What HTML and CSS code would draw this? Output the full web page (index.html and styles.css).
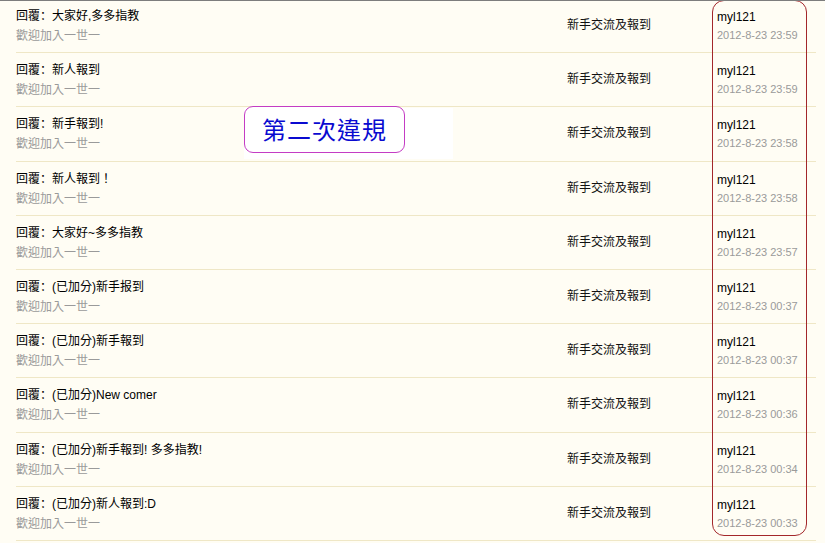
FILE: index.html
```html
<!DOCTYPE html>
<html lang="zh-Hant">
<head>
<meta charset="utf-8">
<title>回覆列表</title>
<link rel="stylesheet" href="styles.css">
</head>
<body>
<div class="frame">
  <div class="list">
    <div class="row">
      <div class="topic"><div class="title">回覆<span class="c" lang="zh-Hans">：</span>大家好,多多指教</div><div class="sub">歡迎加入一世一</div></div>
      <div class="forum">新手交流及報到</div>
      <div class="author"><div class="name">myl121</div><div class="date">2012-8-23 23:59</div></div>
    </div>
    <div class="row">
      <div class="topic"><div class="title">回覆<span class="c" lang="zh-Hans">：</span>新人報到</div><div class="sub">歡迎加入一世一</div></div>
      <div class="forum">新手交流及報到</div>
      <div class="author"><div class="name">myl121</div><div class="date">2012-8-23 23:59</div></div>
    </div>
    <div class="row tall">
      <div class="topic"><div class="title">回覆<span class="c" lang="zh-Hans">：</span>新手報到!</div><div class="sub">歡迎加入一世一</div></div>
      <div class="forum">新手交流及報到</div>
      <div class="author"><div class="name">myl121</div><div class="date">2012-8-23 23:58</div></div>
    </div>
    <div class="row">
      <div class="topic"><div class="title">回覆<span class="c" lang="zh-Hans">：</span>新人報到！</div><div class="sub">歡迎加入一世一</div></div>
      <div class="forum">新手交流及報到</div>
      <div class="author"><div class="name">myl121</div><div class="date">2012-8-23 23:58</div></div>
    </div>
    <div class="row">
      <div class="topic"><div class="title">回覆<span class="c" lang="zh-Hans">：</span>大家好~多多指教</div><div class="sub">歡迎加入一世一</div></div>
      <div class="forum">新手交流及報到</div>
      <div class="author"><div class="name">myl121</div><div class="date">2012-8-23 23:57</div></div>
    </div>
    <div class="row">
      <div class="topic"><div class="title">回覆<span class="c" lang="zh-Hans">：</span>(已加分)新手报到</div><div class="sub">歡迎加入一世一</div></div>
      <div class="forum">新手交流及報到</div>
      <div class="author"><div class="name">myl121</div><div class="date">2012-8-23 00:37</div></div>
    </div>
    <div class="row">
      <div class="topic"><div class="title">回覆<span class="c" lang="zh-Hans">：</span>(已加分)新手報到</div><div class="sub">歡迎加入一世一</div></div>
      <div class="forum">新手交流及報到</div>
      <div class="author"><div class="name">myl121</div><div class="date">2012-8-23 00:37</div></div>
    </div>
    <div class="row tall">
      <div class="topic"><div class="title">回覆<span class="c" lang="zh-Hans">：</span>(已加分)New comer</div><div class="sub">歡迎加入一世一</div></div>
      <div class="forum">新手交流及報到</div>
      <div class="author"><div class="name">myl121</div><div class="date">2012-8-23 00:36</div></div>
    </div>
    <div class="row">
      <div class="topic"><div class="title">回覆<span class="c" lang="zh-Hans">：</span>(已加分)新手報到! 多多指教!</div><div class="sub">歡迎加入一世一</div></div>
      <div class="forum">新手交流及報到</div>
      <div class="author"><div class="name">myl121</div><div class="date">2012-8-23 00:34</div></div>
    </div>
    <div class="row">
      <div class="topic"><div class="title">回覆<span class="c" lang="zh-Hans">：</span>(已加分)新人報到:D</div><div class="sub">歡迎加入一世一</div></div>
      <div class="forum">新手交流及報到</div>
      <div class="author"><div class="name">myl121</div><div class="date">2012-8-23 00:33</div></div>
    </div>
  </div>
  <div class="note-bg"></div>
  <div class="note">第二次違規</div>
  <div class="highlight"></div>
</div>
</body>
</html>
```

FILE: styles.css
```css
html, body {
  margin: 0;
  padding: 0;
  background: #fffdf4;
}
body {
  font-family: "Liberation Sans", "Noto Sans CJK TC", sans-serif;
  font-size: 12px;
  color: #000;
  overflow: hidden;
}
.frame {
  position: relative;
  width: 825px;
  height: 543px;
  border-top: 1px solid #7d7d7d;
  box-sizing: border-box;
  overflow: hidden;
}
.list {
  margin-top: -2px;
  margin-left: 16px;
  width: 800px;
}
.row {
  display: grid;
  grid-template-columns: 551px 150px 1fr;
  height: 54px;
  box-sizing: border-box;
  border-bottom: 1px solid #efe7c6;
}
.row.tall {
  height: 55px;
}
.topic {
  padding-top: 6px;
}
.title {
  line-height: 20px;
  white-space: nowrap;
}
.c {
  font-family: "Noto Sans CJK SC", sans-serif;
}
.sub {
  line-height: 20px;
  color: #9a9a9a;
}
.forum {
  padding-top: 16px;
  line-height: 20px;
  color: #111;
}
.author {
  padding-top: 9px;
}
.name {
  line-height: 18px;
}
.date {
  line-height: 18px;
  font-size: 11px;
  color: #9a9a9a;
}
.note-bg {
  position: absolute;
  left: 244px;
  top: 107px;
  width: 209px;
  height: 51px;
  background: #ffffff;
}
.note {
  position: absolute;
  left: 244px;
  top: 105px;
  width: 161px;
  height: 47px;
  box-sizing: border-box;
  border: 1px solid #c43cc4;
  border-radius: 9px;
  background: #ffffff;
  color: #0a0ad0;
  font-family: "Noto Sans CJK TC", sans-serif;
  font-size: 24px;
  line-height: 44px;
  text-align: center;
  letter-spacing: 1px;
}
.highlight {
  position: absolute;
  left: 712px;
  top: -1px;
  width: 95px;
  height: 536px;
  box-sizing: border-box;
  border: 1px solid #a3272b;
  border-radius: 12px;
}
```
